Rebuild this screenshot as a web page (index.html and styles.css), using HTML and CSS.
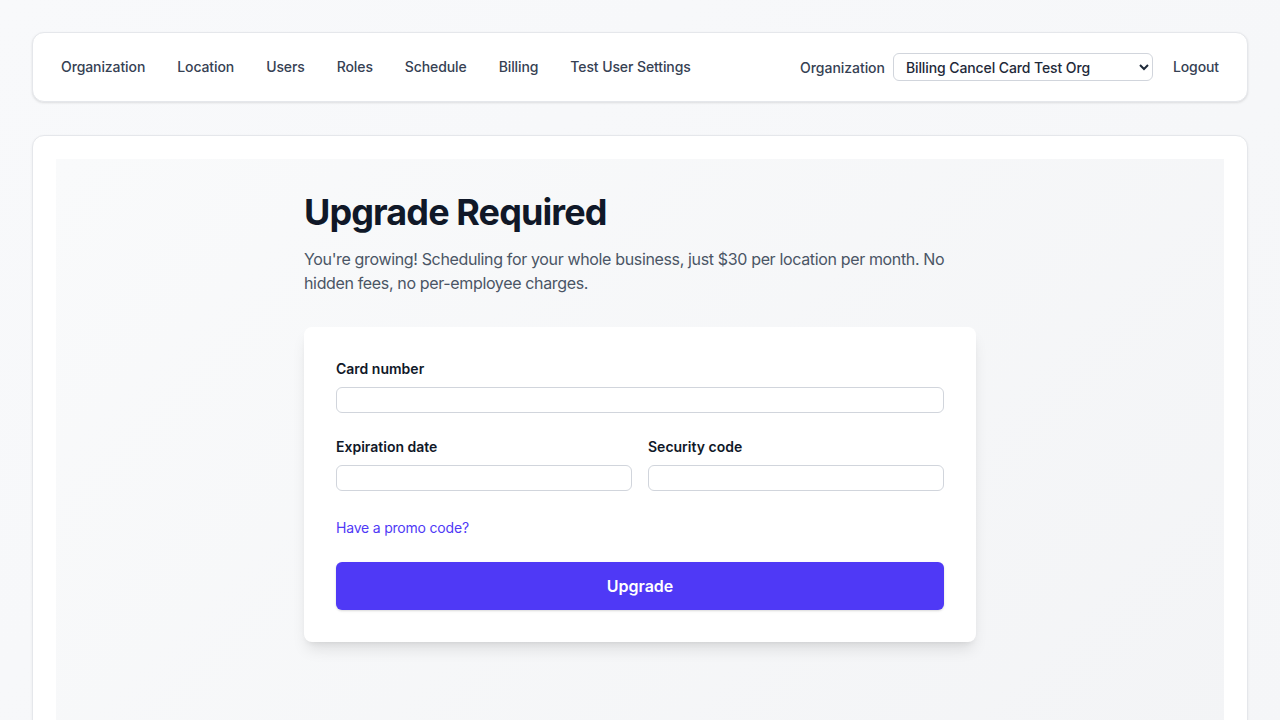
FILE: index.html
```html
<!DOCTYPE html>
<html lang="en">
<head>
<meta charset="utf-8">
<title>Upgrade Required</title>
<link rel="stylesheet" href="styles.css">
</head>
<body>
<div class="page">
  <nav class="nav">
    <div class="nav-links">
      <a class="nav-link" href="#">Organization</a>
      <a class="nav-link" href="#">Location</a>
      <a class="nav-link" href="#">Users</a>
      <a class="nav-link" href="#">Roles</a>
      <a class="nav-link" href="#">Schedule</a>
      <a class="nav-link" href="#">Billing</a>
      <a class="nav-link" href="#">Test User Settings</a>
    </div>
    <div class="nav-right">
      <label class="nav-label" for="org">Organization</label>
      <select id="org" class="org-select">
        <option>Billing Cancel Card Test Org</option>
      </select>
      <a class="nav-link logout" href="#">Logout</a>
    </div>
  </nav>
  <main class="main-card">
    <div class="inner">
      <div class="content">
        <h1 class="title">Upgrade Required</h1>
        <p class="lead">You're growing! Scheduling for your whole business, just $30 per location per month. No hidden fees, no per-employee charges.</p>
        <form class="pay-card">
          <div class="field">
            <label class="field-label">Card number</label>
            <div class="input"></div>
          </div>
          <div class="row">
            <div class="field">
              <label class="field-label">Expiration date</label>
              <div class="input"></div>
            </div>
            <div class="field">
              <label class="field-label">Security code</label>
              <div class="input"></div>
            </div>
          </div>
          <a class="promo" href="#">Have a promo code?</a>
          <button type="button" class="btn">Upgrade</button>
        </form>
      </div>
    </div>
  </main>
</div>
</body>
</html>
```
FILE: styles.css
```css
* { box-sizing: border-box; }
html, body { margin: 0; padding: 0; }
body {
  font-family: Inter, "Noto Sans", sans-serif;
  background: linear-gradient(135deg, #f8f9fb 0%, #f5f6f8 100%);
  color: #101828;
  min-height: 720px;
}
.page {
  padding: 32px 32px 0 32px;
}
.nav {
  height: 70px;
  background: #fff;
  border: 1px solid #e5e7eb;
  border-radius: 12px;
  box-shadow: 0 1px 3px rgba(0,0,0,0.08), 0 1px 2px rgba(0,0,0,0.04);
  display: flex;
  align-items: center;
  justify-content: space-between;
  padding: 0 28px 0 28px;
  margin-bottom: 33px;
}
.nav-links {
  display: flex;
  gap: 32px;
}
.nav-link {
  font-size: 14px;
  font-weight: 500;
  color: #364153;
  text-decoration: none;
  line-height: 20px;
  letter-spacing: -0.1px;
}
.nav-right {
  display: flex;
  align-items: center;
}
.nav-label {
  font-size: 14px;
  font-weight: 500;
  color: #364153;
  margin-right: 8px;
  letter-spacing: -0.05px;
}
.org-select {
  width: 260px;
  height: 28px;
  font-family: Inter, "Noto Sans", sans-serif;
  font-size: 14px;
  font-weight: 500;
  color: #1e2939;
  border: 1px solid #d1d5dc;
  border-radius: 6px;
  background: #fff;
  padding: 0 8px 0 8px;
  margin-right: 20px;
  letter-spacing: -0.1px;
}
.main-card {
  background: #fff;
  border: 1px solid #e5e7eb;
  border-radius: 12px;
  box-shadow: 0 1px 3px rgba(0,0,0,0.06);
  padding: 23px 23px 0 23px;
}
.inner {
  background: linear-gradient(135deg, #f9fafb 0%, #f3f4f6 100%);
  min-height: 600px;
  padding-top: 33px;
  display: flex;
  justify-content: center;
}
.content {
  width: 672px;
}
.title {
  margin: 0 0 15px 0;
  font-size: 36px;
  line-height: 40px;
  font-weight: 700;
  color: #101828;
  letter-spacing: -0.9px;
}
.lead {
  margin: 0 0 32px 0;
  font-size: 16px;
  line-height: 24px;
  color: #4a5565;
  letter-spacing: -0.35px;
}
.pay-card {
  background: #fff;
  border-radius: 8px;
  box-shadow: 0 10px 15px -3px rgba(0,0,0,0.1), 0 4px 6px -4px rgba(0,0,0,0.1);
  padding: 32px;
  display: flex;
  flex-direction: column;
}
.field {
  display: flex;
  flex-direction: column;
  gap: 8px;
}
.field-label {
  font-size: 14px;
  line-height: 20px;
  font-weight: 600;
  color: #101828;
}
.input {
  height: 26px;
  border: 1px solid #d1d5dc;
  border-radius: 6px;
  background: #fff;
}
.row {
  display: grid;
  grid-template-columns: 1fr 1fr;
  gap: 16px;
  margin-top: 24px;
}
.promo {
  margin-top: 27px;
  font-size: 14px;
  line-height: 20px;
  color: #4f39f6;
  text-decoration: none;
  letter-spacing: -0.2px;
}
.btn {
  margin-top: 24px;
  height: 48px;
  border: none;
  border-radius: 6px;
  background: #4f39f6;
  color: #fff;
  font-family: Inter, "Noto Sans", sans-serif;
  font-size: 16px;
  font-weight: 600;
  box-shadow: 0 1px 3px rgba(0,0,0,0.1), 0 1px 2px rgba(0,0,0,0.06);
}
```
